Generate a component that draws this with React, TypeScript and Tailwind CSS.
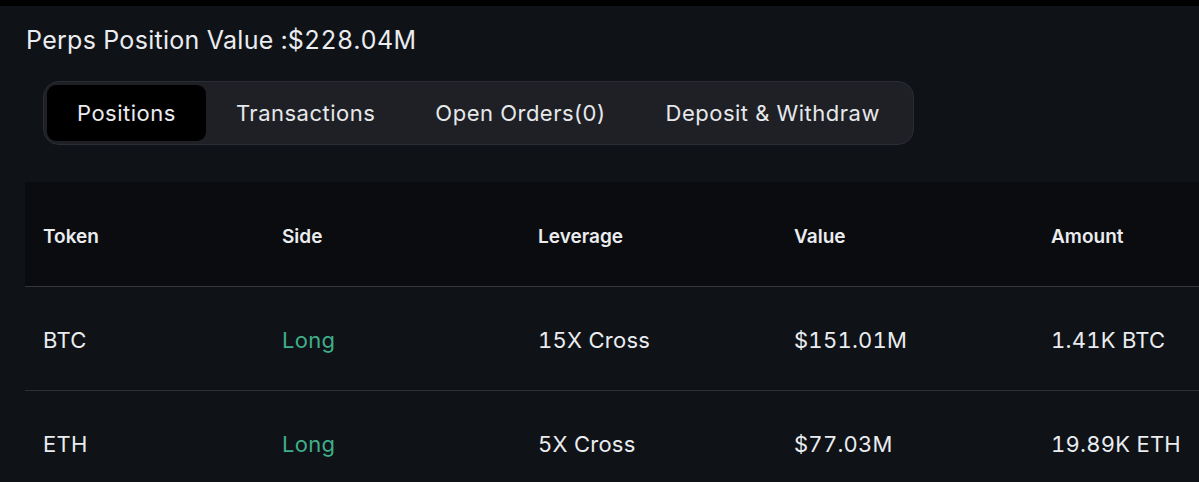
const TABS = ["Positions", "Transactions", "Open Orders(0)", "Deposit & Withdraw"];

const COLUMNS = ["Token", "Side", "Leverage", "Value", "Amount"];

const ROWS = [
  { token: "BTC", side: "Long", leverage: "15X Cross", value: "$151.01M", amount: "1.41K BTC" },
  { token: "ETH", side: "Long", leverage: "5X Cross", value: "$77.03M", amount: "19.89K ETH" },
];

const COLS = "grid grid-cols-[239px_256px_256px_257px_1fr] items-center";

export default function App() {
  return (
    <div
      className="h-[482px] w-[1199px] overflow-hidden bg-[#0f1217] text-[#eaecef]"
      style={{ fontFamily: 'Inter, "Noto Sans", sans-serif' }}
    >
      {/* top strip */}
      <div className="h-[6px] bg-black" />

      {/* summary */}
      <div className="pl-[26px] pt-[16px] text-[25px] leading-[36px] tracking-[0.3px] tabular-nums">
        Perps Position Value :$228.04M
      </div>

      {/* tabs */}
      <div className="mt-[23px] ml-[43px] inline-flex rounded-[16px] border border-[#2a2d33] bg-[#1e2026] p-[3px]">
        {TABS.map((tab, i) => (
          <div
            key={tab}
            className={
              i === 0
                ? "h-[56px] flex items-center rounded-[9px] bg-black px-[30px] text-[22px] tracking-[0.5px]"
                : "h-[56px] flex items-center px-[30px] text-[22px] tracking-[0.5px] text-[#e6e8ea]"
            }
          >
            {tab}
          </div>
        ))}
      </div>

      {/* table */}
      <div className="mt-[37px] ml-[25px]">
        <div className={`${COLS} h-[105px] bg-[#0b0c0f] border-b border-[#34373c]`}>
          {COLUMNS.map((c) => (
            <div key={c} className="pl-[18px] pt-[6px] text-[19px] font-semibold">
              {c}
            </div>
          ))}
        </div>
        {ROWS.map((r) => (
          <div
            key={r.token}
            className={`${COLS} h-[104px] pt-[4px] border-b border-[#2c2f34] text-[22px] tracking-[0.25px] tabular-nums`}
          >
            <div className="pl-[18px]">{r.token}</div>
            <div className="pl-[18px] text-[#3fae8a]">{r.side}</div>
            <div className="pl-[18px]">{r.leverage}</div>
            <div className="pl-[18px]">{r.value}</div>
            <div className="pl-[18px]">{r.amount}</div>
          </div>
        ))}
      </div>
    </div>
  );
}
